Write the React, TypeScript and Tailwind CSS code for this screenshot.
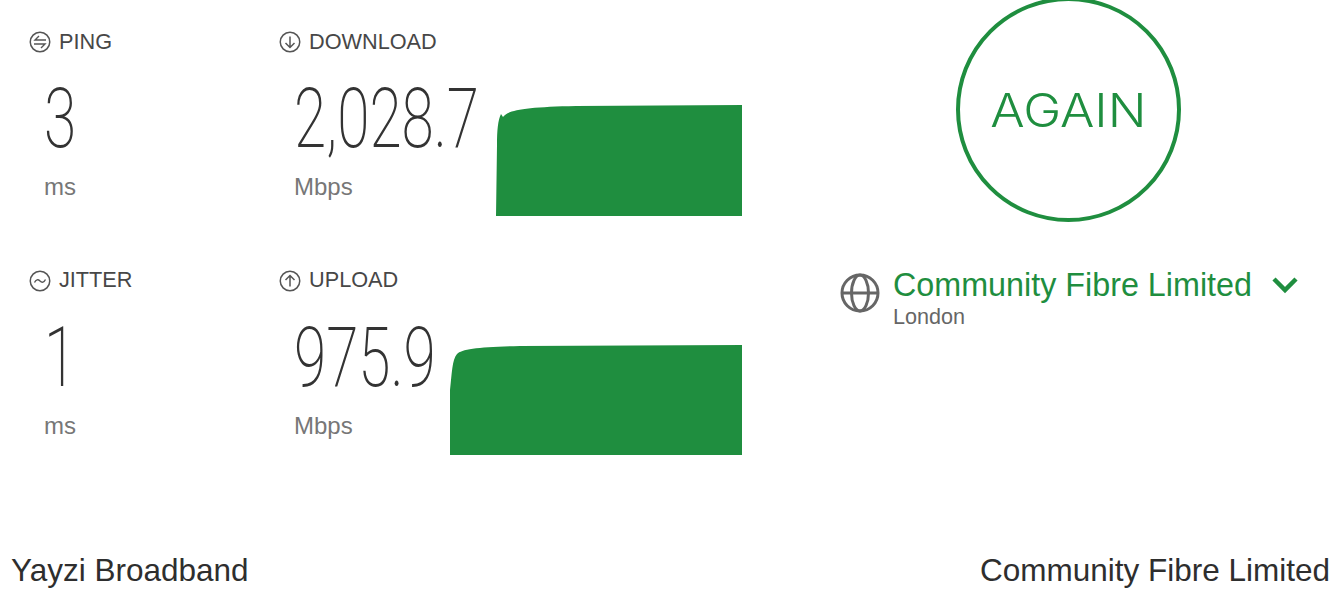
const G = "#1f8e3f";

function PingIcon() {
  return (
    <svg width="22" height="22" viewBox="0 0 22 22" fill="none" stroke="#555" strokeWidth="1.5">
      <circle cx="11" cy="11" r="9.75" />
      <path d="M17 9H6l4-4M5 13h11l-4 4" strokeWidth="1.4" />
    </svg>
  );
}
function JitterIcon() {
  return (
    <svg width="22" height="22" viewBox="0 0 22 22" fill="none" stroke="#555" strokeWidth="1.5">
      <circle cx="11" cy="11" r="9.75" />
      <path d="M5.5 12.5c1.5-3 3.5-3.5 5.5-1.5s4 1.5 5.5-1.5" strokeWidth="1.4" />
    </svg>
  );
}
function DownIcon() {
  return (
    <svg width="22" height="22" viewBox="0 0 22 22" fill="none" stroke="#555" strokeWidth="1.5">
      <circle cx="11" cy="11" r="9.75" />
      <path d="M11 5.5v11M6.5 12l4.5 4.5 4.5-4.5" strokeWidth="1.5" />
    </svg>
  );
}
function UpIcon() {
  return (
    <svg width="22" height="22" viewBox="0 0 22 22" fill="none" stroke="#555" strokeWidth="1.5">
      <circle cx="11" cy="11" r="9.75" />
      <path d="M11 16.5v-11M6.5 10L11 5.5 15.5 10" strokeWidth="1.5" />
    </svg>
  );
}

function Metric({ icon, label, value, unit, children }: { icon: React.ReactNode; label: string; value: string; unit: string; children?: React.ReactNode }) {
  return (
    <div className="flex flex-col h-[238.5px]">
      <div className="flex items-center gap-[8px] h-[24px] text-[21.7px] text-[#474747]">
        {icon}
        <span>{label}</span>
      </div>
      <div className="mt-[12px] h-[150px] flex items-end justify-between">
        <div className="flex-1 min-w-0 h-[150px] pt-[8px]">
          <span className="block h-[90px] ml-[15px] leading-[90px] text-[84px] text-[#333] font-['Roboto',sans-serif] font-extralight whitespace-nowrap origin-left scale-x-[0.696]">
            {value}
          </span>
          <span className="block pl-[15px] mt-[9px] text-[24px] leading-[28px] text-[#777]">{unit}</span>
        </div>
        {children}
      </div>
    </div>
  );
}

export default function App() {
  return (
    <div className="h-[590px] w-[1340px] overflow-hidden bg-white flex flex-col font-['Liberation_Sans',sans-serif]">
      <div className="flex h-[550px]">
        <div className="w-[279px] pl-[29px] pt-[30px] flex flex-col">
          <Metric icon={<PingIcon />} label="PING" value="3" unit="ms" />
          <Metric icon={<JitterIcon />} label="JITTER" value="1" unit="ms" />
        </div>
        <div className="w-[463px] pt-[30px] flex flex-col">
          <Metric icon={<DownIcon />} label="DOWNLOAD" value="2,028.7" unit="Mbps">
            <svg width="246" height="111" viewBox="0 0 246 111" className="shrink-0">
              <path d="M0 111 L1 40 C1 25 2 15 5 9 L7 12 C12 5 30 2 80 1 L246 0 V111Z" fill={G} />
            </svg>
          </Metric>
          <Metric icon={<UpIcon />} label="UPLOAD" value="975.9" unit="Mbps">
            <svg width="292" height="110" viewBox="0 0 292 110" className="shrink-0">
              <path d="M0 110 V45 C2 28 2 15 7 9 C12 4 30 2 70 1 L292 0 V110Z" fill={G} />
            </svg>
          </Metric>
        </div>
        <div className="flex-1 flex flex-col pl-[98px]">
          <div className="ml-[116px] mt-[-3px] w-[225px] h-[225px] shrink-0 rounded-full border-[4px] border-[#1f8e3f] flex items-center justify-center">
            <span className="text-[46px] text-[#1f8e3f] font-['Inter',sans-serif] font-light leading-none scale-x-[1.11]">AGAIN</span>
          </div>
          <div className="mt-[45px] flex items-start gap-[13px]">
            <svg width="40" height="40" viewBox="0 0 40 40" fill="none" stroke="#666" strokeWidth="3" className="mt-[6px] shrink-0">
              <circle cx="20" cy="20" r="18" />
              <ellipse cx="20" cy="20" rx="8.5" ry="18" />
              <path d="M2 20h36" />
            </svg>
            <div className="flex flex-col">
              <div className="flex items-center">
                <span className="text-[32.3px] leading-[36px] text-[#1f8e3f]">Community Fibre Limited</span>
                <svg width="26" height="18" viewBox="0 0 26 18" fill="none" stroke="#1f8e3f" strokeWidth="4.5" className="ml-[20px]">
                  <path d="M2 3l11 11L24 3" />
                </svg>
              </div>
              <span className="text-[21.6px] leading-[26px] mt-[1px] text-[#666]">London</span>
            </div>
          </div>
        </div>
      </div>
      <div className="flex justify-between items-center pl-[11px] pr-[10px] text-[31.5px] leading-[40px] text-[#2e2e2e]">
        <span>Yayzi Broadband</span>
        <span>Community Fibre Limited</span>
      </div>
    </div>
  );
}
